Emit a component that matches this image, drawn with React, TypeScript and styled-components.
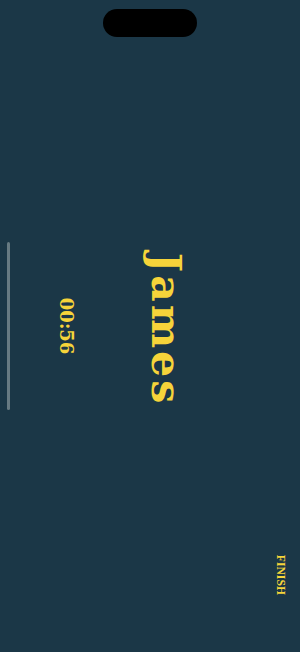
import * as React from 'react';
import styled, { createGlobalStyle } from 'styled-components';

const GlobalStyle = createGlobalStyle`
  html, body {
    margin: 0;
    padding: 0;
    background: #1b3747;
  }
`;

const Screen = styled.div`
  position: relative;
  width: 300px;
  height: 652px;
  overflow: hidden;
  background: #1b3747;
`;

const Island = styled.div`
  position: absolute;
  top: 9px;
  left: 103px;
  width: 94px;
  height: 28px;
  border-radius: 14px;
  background: #000;
  z-index: 2;
`;

// the whole view is laid out landscape and turned a quarter clockwise
const Stage = styled.div`
  width: 652px;
  height: 300px;
  transform-origin: 0 0;
  transform: translateX(300px) rotate(90deg);
  display: flex;
  flex-direction: column;
  color: #f6d43a;
`;

const TopBar = styled.div`
  display: flex;
  justify-content: flex-end;
  padding: 14px 57px 0;
`;

const FinishButton = styled.button`
  background: none;
  border: none;
  padding: 0;
  color: #f6d43a;
  font-family: 'Liberation Serif', serif;
  font-weight: 700;
  font-size: 11.5px;
  line-height: 1;
  letter-spacing: 0.1px;
`;

const Body = styled.div`
  flex: 1;
  display: flex;
  flex-direction: column;
  align-items: center;
  padding-top: 88px;
`;

const Name = styled.div`
  font-family: 'DejaVu Serif', serif;
  font-weight: 700;
  font-size: 41px;
  line-height: 1;
  letter-spacing: 3px;
  padding-left: 7px;
`;

const Timer = styled.div`
  margin-top: 70px;
  font-family: 'DejaVu Serif', serif;
  font-weight: 700;
  font-size: 18px;
  line-height: 1;
`;

const Track = styled.div`
  margin-top: 47px;
  width: 168px;
  height: 3px;
  border-radius: 2px;
  background: #677a82;
`;

export default function App() {
  return (
    <>
      <GlobalStyle />
      <Screen>
        <Island />
        <Stage>
          <TopBar>
            <FinishButton>FINISH</FinishButton>
          </TopBar>
          <Body>
            <Name>James</Name>
            <Timer>00:56</Timer>
            <Track />
          </Body>
        </Stage>
      </Screen>
    </>
  );
}
